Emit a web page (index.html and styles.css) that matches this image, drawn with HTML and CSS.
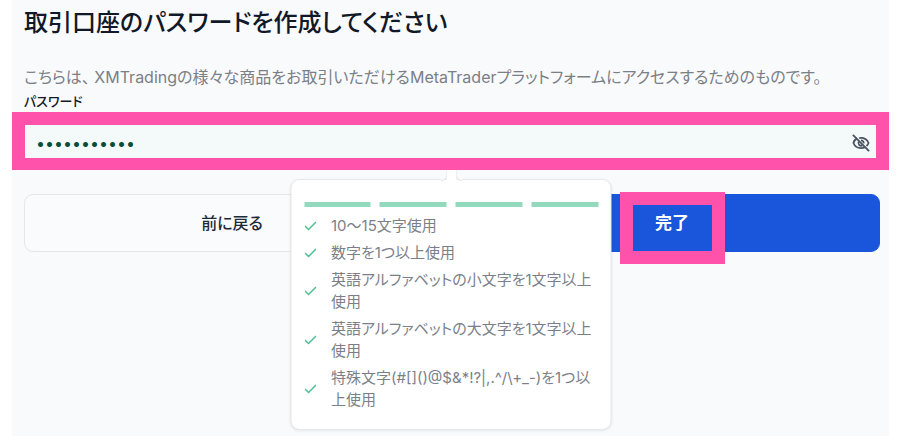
FILE: index.html
```
<!DOCTYPE html>
<html lang="ja">
<head>
    <meta charset="UTF-8">
    <meta name="viewport" content="width=device-width, initial-scale=1">
    <title>取引口座のパスワード</title>
    <link rel="stylesheet" href="styles.css">
</head>
<body>
    <form class="panel">
        <h1>取引口座のパスワードを作成してください</h1>
        <p class="lead">こちらは、 XMTradingの様々な商品をお取引いただけるMetaTraderプラットフォームにアクセスするためのものです。</p>
        <label class="label" for="password">パスワード</label>
        <div class="field">
            <input type="password" id="password" value="Abcdef1234!">
            <button type="button" class="toggle" aria-label="パスワードを表示">
                <svg width="18" height="18" viewBox="0 0 20 20" fill="none" stroke="#4b5160" stroke-width="2">
                    <path d="M5.500 4.900C3.500 6 2.200 7.800 1.600 10c1.300 3.400 4.500 5.700 8.400 5.700 1.700 0 3.200-.4 4.500-1.100M8 4.500c.7-.1 1.300-.2 2-.2 3.900 0 7.100 2.300 8.400 5.700-.5 1.300-1.300 2.400-2.300 3.300"/>
                    <path d="M7.500 8.400a3.100 3.100 0 0 0 4 4.300M10 7a3.100 3.100 0 0 1 3 3.500"/>
                    <path d="M1 1l18 18"/>
                </svg>
            </button>
        </div>

        <div class="actions">
            <button type="button" class="btn">前に戻る</button>
            <button type="submit" class="btn btn-primary"><span class="marked">完了</span></button>

            <div class="tooltip">
                <div class="arrow"></div>
                <div class="strength">
                    <span></span>
                    <span></span>
                    <span></span>
                    <span></span>
                </div>
                <ul class="rules">
                    <li><svg class="check" viewBox="0 0 12 10"><path d="M.5 5l3.500 3.500L11.500 1"/></svg>10～15文字使用</li>
                    <li><svg class="check" viewBox="0 0 12 10"><path d="M.5 5l3.500 3.500L11.500 1"/></svg>数字を1つ以上使用</li>
                    <li><svg class="check" viewBox="0 0 12 10"><path d="M.5 5l3.500 3.500L11.500 1"/></svg>英語アルファベットの小文字を1文字以上使用</li>
                    <li><svg class="check" viewBox="0 0 12 10"><path d="M.5 5l3.500 3.500L11.500 1"/></svg>英語アルファベットの大文字を1文字以上使用</li>
                    <li><svg class="check" viewBox="0 0 12 10"><path d="M.5 5l3.500 3.500L11.500 1"/></svg>特殊文字(#[]()@$&amp;*!?|,.^/\+_-)を1つ以上使用</li>
                </ul>
            </div>
        </div>
    </form>
</body>
</html>
```
FILE: styles.css
```
* {
    box-sizing: border-box;
}
body {
    margin: 0;
    background: #fff;
    color: #111827;
    font-family: Inter, "Noto Sans CJK JP", sans-serif;
    font-size: 16px;
    font-feature-settings: "palt";
}
.panel {
    margin: 0 10px 6px 12px;
    min-height: calc(100vh - 6px);
    background: #f9fafc;
}
h1 {
    margin: 0;
    padding: 5px 12px 0;
    font-size: 24px;
    line-height: 36px;
    font-weight: 500;
}
.lead {
    margin: 0;
    padding: 24px 12px 0;
    font-size: 16px;
    line-height: 24px;
    color: #7b7f86;
}
.label {
    display: block;
    padding: 1px 12px 0;
    font-size: 13px;
    line-height: 22px;
    font-weight: 500;
}
.field {
    display: flex;
    align-items: center;
    height: 58px;
    border: 13px solid #ff52ab;
    border-bottom-width: 12px;
    background: #f3faf9;
}
.field input {
    flex: 1;
    min-width: 0;
    padding: 2px 11px 0;
    border: 0;
    outline: 0;
    background: transparent;
    color: #064e3b;
    font: 16px Inter, sans-serif;
}
.toggle {
    display: flex;
    padding: 2px 6px 0;
    border: 0;
    background: none;
}
.actions {
    position: relative;
    display: grid;
    grid-template-columns: 1fr 1fr;
    gap: 24px;
    padding: 24px 9px 0 12px;
}
.btn {
    height: 58px;
    padding: 0 0 2px;
    border: 1px solid #e5e7eb;
    border-radius: 9px;
    background: #fafbfd;
    color: #1f2937;
    font: inherit;
    font-weight: 500;
    cursor: pointer;
}
.btn-primary {
    padding-bottom: 4px;
    border-color: #1a56db;
    background: #1a56db;
    color: #fff;
    font-size: 17px;
    font-weight: 700;
}
.marked {
    position: relative;
}
/* highlight frame over the submit button */
.marked::after {
    content: "";
    position: absolute;
    inset: -21px -36px -31px -35px;
    border: 13px solid #ff52ab;
}
.tooltip {
    position: absolute;
    top: 9px;
    left: 50%;
    width: 321px;
    transform: translateX(-50%);
    padding: 22px 12px 18px 13px;
    border: 1px solid #e5e7eb;
    border-radius: 9px;
    background: #fff;
    color: #7b7f8a;
    box-shadow: 0 1px 3px rgba(0, 0, 0, 0.08);
}
.arrow {
    position: absolute;
    top: -10px;
    left: 155px;
    width: 10px;
    height: 10px;
    background: #fff;
}
.arrow::before,
.arrow::after {
    content: "";
    position: absolute;
    top: 0;
    width: 6px;
    height: 10px;
    border: 0 solid #e5e7eb;
    border-bottom-width: 1px;
    background: #f9fafc;
}
.arrow::before {
    right: 9px;
    border-right-width: 1px;
    border-bottom-right-radius: 6px;
}
.arrow::after {
    left: 9px;
    border-left-width: 1px;
    border-bottom-left-radius: 6px;
}
.strength {
    display: grid;
    grid-template-columns: repeat(4, 1fr);
    gap: 9px;
}
.strength span {
    height: 5px;
    background: #93d9bd;
}
.rules {
    display: grid;
    gap: 5px;
    margin: 8px 0 0;
    padding: 0;
    list-style: none;
    font-size: 15px;
    line-height: 22px;
}
.rules li {
    display: flex;
    align-items: center;
    gap: 15px;
}
.check {
    flex: none;
    width: 12px;
    height: 10px;
    fill: none;
    stroke: #4fc092;
    stroke-width: 1.5;
}
```
